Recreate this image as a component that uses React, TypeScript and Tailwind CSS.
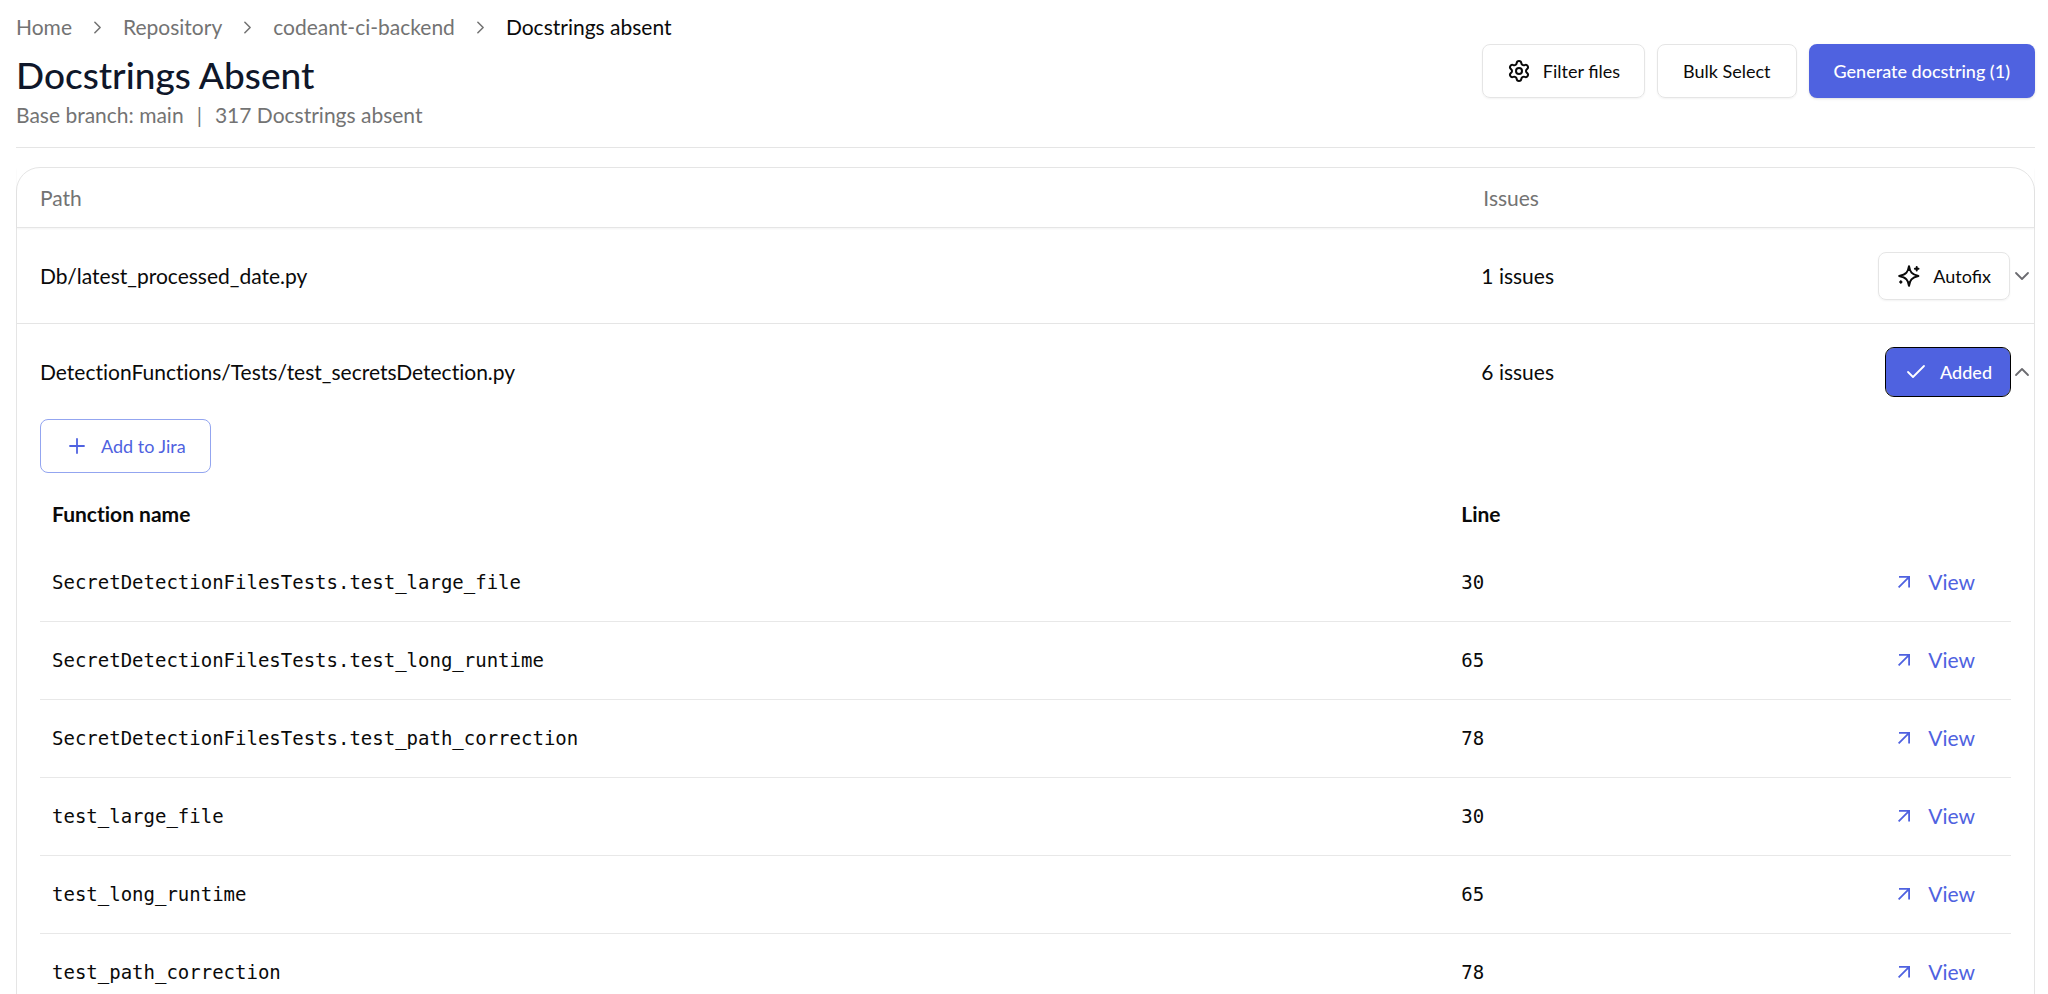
import React, { useState } from "react";
import { Check, ChevronDown, ChevronRight, ChevronUp, Plus, Settings } from "lucide-react";

type Finding = { name: string; line: number };

const trail = ["Home", "Repository", "codeant-ci-backend"];

const findings: Finding[] = [
  { name: "SecretDetectionFilesTests.test_large_file", line: 30 },
  { name: "SecretDetectionFilesTests.test_long_runtime", line: 65 },
  { name: "SecretDetectionFilesTests.test_path_correction", line: 78 },
  { name: "test_large_file", line: 30 },
  { name: "test_long_runtime", line: 65 },
  { name: "test_path_correction", line: 78 },
];

function SparkleIcon() {
  return (
    <svg
      className="size-6"
      viewBox="0 0 24 24"
      fill="none"
      stroke="currentColor"
      strokeWidth="2"
      strokeLinecap="round"
      strokeLinejoin="round"
      aria-hidden="true"
    >
      <path d="M12 2.2c.9 5.6 2.6 8.1 9.4 9.8-6.8 1.7-8.5 4.2-9.4 9.8-.9-5.6-2.6-8.1-9.8-9.8C9.400 10.300 11.100 7.800 12 2.200z" />
      <path d="M19.700 3v3.600M17.900 4.800h3.600" />
      <path d="M3.800 17.300v1.400M3.100 18h1.400" />
    </svg>
  );
}

function ArrowIcon() {
  return (
    <svg
      className="size-3"
      viewBox="0 0 12 12"
      fill="none"
      stroke="currentColor"
      strokeWidth="1.8"
      aria-hidden="true"
    >
      <path d="M1 .9h10.1V11.5M10.9 1.1.6 11.4" />
    </svg>
  );
}

function FileRow({
  path,
  issues,
  open,
  onToggle,
  children,
}: {
  path: string;
  issues: number;
  open: boolean;
  onToggle: () => void;
  children: React.ReactNode;
}) {
  const Chevron = open ? ChevronUp : ChevronDown;
  return (
    <div className="grid h-[95px] grid-cols-[72.6%_1fr] items-center">
      <div className="pl-[23px] [font-variant-ligatures:none]">{path}</div>
      <div className="flex items-center justify-between">
        <span>{issues} issues</span>
        <div className="flex items-center">
          {children}
          <button
            type="button"
            aria-expanded={open}
            aria-label={`Toggle ${path}`}
            onClick={onToggle}
            className="flex text-[#6b6b70]"
          >
            <Chevron className="size-6" strokeWidth={1.8} />
          </button>
        </div>
      </div>
    </div>
  );
}

export default function App() {
  const [firstOpen, setFirstOpen] = useState(false);
  const [secondOpen, setSecondOpen] = useState(true);

  return (
    <div className="h-screen overflow-hidden bg-white pt-3 pr-[13px] pl-4 font-[Lato,sans-serif] text-[21px] leading-[30px] text-[#0a0a0a]">
      <nav aria-label="Breadcrumb">
        <ol className="flex items-center">
          {trail.map((item) => (
            <li key={item} className="flex items-center text-[#737373]">
              <a href="#">{item}</a>
              <ChevronRight className="mx-[15px] size-[21px]" strokeWidth={1.8} />
            </li>
          ))}
          <li aria-current="page">Docstrings absent</li>
        </ol>
      </nav>

      <header className="mt-0.5 flex items-start justify-between border-b border-[#e5e5e5] pb-[17px]">
        <div className="pt-2">
          <h1 className="mb-0.5 text-[37px] leading-[46px] font-medium text-[#0f172a]">Docstrings Absent</h1>
          <p className="flex gap-[13px] text-[#737373]">
            <span>Base branch: main</span>
            <span>|</span>
            <span>317 Docstrings absent</span>
          </p>
        </div>
        <div className="flex gap-3 text-[18px]">
          <button type="button" className="flex h-[54px] items-center gap-3 rounded-lg border border-[#e5e5e5] px-6 shadow-xs">
            <Settings className="size-6" strokeWidth={2} />
            Filter files
          </button>
          <button type="button" className="h-[54px] rounded-lg border border-[#e5e5e5] px-[25px] shadow-xs">
            Bulk Select
          </button>
          <button type="button" className="h-[54px] rounded-lg bg-[#4f62e0] px-[25px] font-medium text-white shadow-sm">
            Generate docstring (1)
          </button>
        </div>
      </header>

      <main className="mt-[19px] rounded-t-3xl border border-[#e5e5e5]">
        <div className="grid h-[60px] grid-cols-[72.6%_1fr] items-center border-b border-[#e5e5e5] text-[#737373] shadow-xs">
          <div className="pl-[23px]">Path</div>
          <div className="pl-0.5">Issues</div>
        </div>

        <section className="border-b border-[#e5e5e5]">
          <FileRow path="Db/latest_processed_date.py" issues={1} open={firstOpen} onToggle={() => setFirstOpen(!firstOpen)}>
            <button type="button" className="flex h-12 items-center gap-3 rounded-lg border border-[#e5e5e5] px-[18px] text-[18px] shadow-xs">
              <SparkleIcon />
              Autofix
            </button>
          </FileRow>
        </section>

        <section>
          <FileRow
            path="DetectionFunctions/Tests/test_secretsDetection.py"
            issues={6}
            open={secondOpen}
            onToggle={() => setSecondOpen(!secondOpen)}
          >
            <button
              type="button"
              className="flex h-12 items-center gap-3 rounded-lg bg-[#4f62e0] px-[18px] text-[18px] font-medium text-white outline outline-black"
            >
              <Check className="size-6" strokeWidth={1.8} />
              Added
            </button>
          </FileRow>

          {secondOpen && (
            <div className="px-[23px]">
              <button
                type="button"
                className="flex h-[54px] items-center gap-3 rounded-lg border border-[#93a5f0] px-6 text-[18px] text-[#4f62e0]"
              >
                <Plus className="size-6" strokeWidth={1.8} />
                Add to Jira
              </button>

              <table className="mt-3 w-full table-fixed text-left">
                <thead>
                  <tr className="h-[58px]">
                    <th className="px-3 font-bold [font-variant-ligatures:none]">Function name</th>
                    <th className="w-[15%] px-3 font-bold">Line</th>
                    <th className="w-[13.5%]" aria-label="Actions" />
                  </tr>
                </thead>
                <tbody>
                  {findings.map((finding) => (
                    <tr key={finding.name} className="h-[78px] border-b border-[#e8e8e8]">
                      <td className="px-3 font-['DejaVu_Sans_Mono',monospace] text-[19px]">{finding.name}</td>
                      <td className="px-3 font-['DejaVu_Sans_Mono',monospace] text-[19px]">{finding.line}</td>
                      <td className="pr-9">
                        <a href="#" className="flex items-center justify-end gap-[18px] text-[#4f62e0]">
                          <ArrowIcon />
                          View
                        </a>
                      </td>
                    </tr>
                  ))}
                </tbody>
              </table>
            </div>
          )}
        </section>
      </main>
    </div>
  );
}
